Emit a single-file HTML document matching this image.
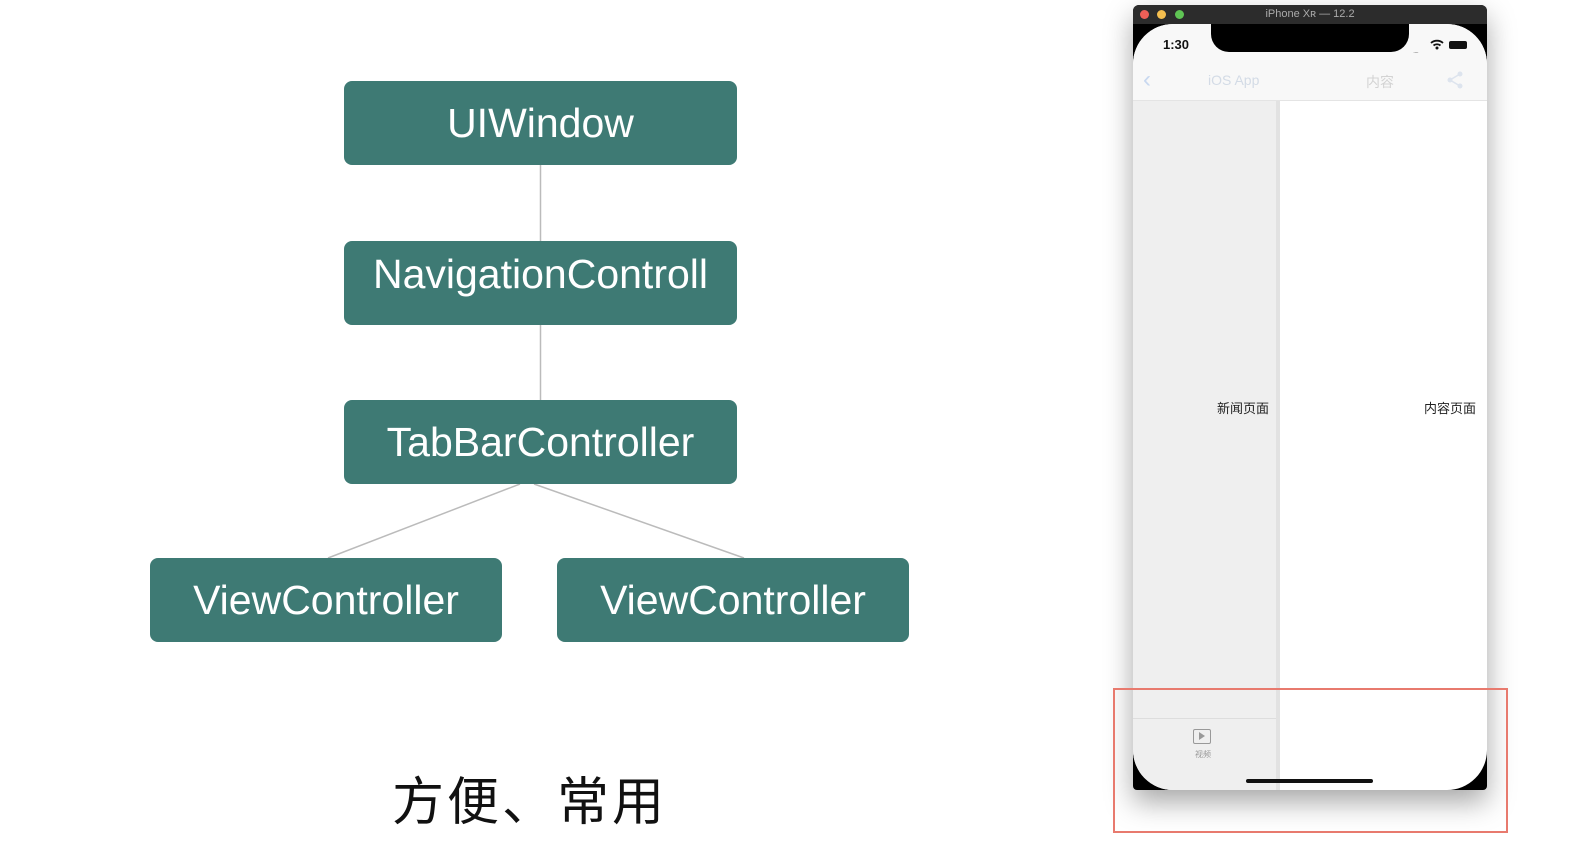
<!DOCTYPE html>
<html><head><meta charset="utf-8"><style>
body{margin:0;width:1586px;height:852px;background:#fff;position:relative;overflow:hidden;font-family:"Liberation Sans","Noto Sans CJK SC",sans-serif}
.b{position:absolute;background:#3e7a74;border-radius:8px;color:#fff;font-size:41px;text-align:center;line-height:84px;height:84px}
.a{position:absolute}
</style></head><body>
<svg class="a" style="left:0;top:0" width="1000" height="700">
<line x1="540.5" y1="164" x2="540.5" y2="241" stroke="#bbb" stroke-width="1.5"/>
<line x1="540.5" y1="324" x2="540.5" y2="400" stroke="#bbb" stroke-width="1.5"/>
<line x1="520" y1="484" x2="328" y2="558" stroke="#bbb" stroke-width="1.5"/>
<line x1="534" y1="484" x2="744" y2="558" stroke="#bbb" stroke-width="1.5"/>
</svg>
<div class="b" style="left:344px;top:81px;width:393px">UIWindow</div>
<div class="b" style="left:344px;top:241px;width:393px;line-height:66px">NavigationControll</div>
<div class="b" style="left:344px;top:400px;width:393px">TabBarController</div>
<div class="b" style="left:150px;top:558px;width:352px">ViewController</div>
<div class="b" style="left:557px;top:558px;width:352px">ViewController</div>
<div class="a" style="left:392px;top:760px;font-size:52px;color:#111;letter-spacing:3px">方便、常用</div>

<!-- phone -->
<div class="a" style="left:1133px;top:5px;width:354px;height:785px;background:#000;border-radius:6px 6px 4px 4px;box-shadow:0 12px 28px rgba(0,0,0,.35)"></div>
<div class="a" style="left:1133px;top:5px;width:354px;height:19px;background:#2c2c2c;border-radius:6px 6px 0 0;color:#aaa;font-size:11px;text-align:center;line-height:19px">iPhone Xʀ — 12.2</div>
<div class="a" style="left:1140px;top:10px;width:9px;height:9px;border-radius:50%;background:#ed5f57"></div>
<div class="a" style="left:1157px;top:10px;width:9px;height:9px;border-radius:50%;background:#f4be4f"></div>
<div class="a" style="left:1175px;top:10px;width:9px;height:9px;border-radius:50%;background:#5fc454"></div>
<div class="a" style="left:1133px;top:24px;width:354px;height:766px;background:#fff;border-radius:40px;overflow:hidden">
  <div class="a" style="left:0;top:76px;width:143px;height:690px;background:#efefef"></div>
  <div class="a" style="left:143px;top:76px;width:4px;height:690px;background:#e2e2e2"></div>
  <div class="a" style="left:0;top:0;width:354px;height:76px;background:#f8f8f8;border-bottom:1px solid #e4e4e4"></div>
  <div class="a" style="left:0;top:694px;width:143px;height:1px;background:#ddd"></div>
  <div class="a" style="left:30px;top:13px;font-size:13px;font-weight:bold;color:#111">1:30</div>
  <div class="a" style="left:280px;top:22px;font-size:8px;color:#999;letter-spacing:-1px">....</div>
  <svg class="a" style="left:297px;top:15px" width="14" height="11" viewBox="0 0 14 11"><path d="M1 4a9 9 0 0 1 12 0M3.5 6.5a5.5 5.5 0 0 1 7 0" stroke="#111" stroke-width="1.8" fill="none"/><circle cx="7" cy="9" r="1.5" fill="#111"/></svg>
  <div class="a" style="left:316px;top:17px;width:18px;height:8px;background:#111;border-radius:2px"></div>
  <div class="a" style="left:10px;top:42px;font-size:24px;color:#c8d8f0">‹</div>
  <div class="a" style="left:75px;top:48px;font-size:14px;color:#d3dbe6">iOS App</div>
  <div class="a" style="left:233px;top:48px;font-size:14px;color:#d3d3d3">内容</div>
  <svg class="a" style="left:313px;top:47px" width="18" height="18" viewBox="0 0 18 18"><circle cx="14" cy="3" r="2.5" fill="#dde4ee"/><circle cx="4" cy="9" r="2.5" fill="#dde4ee"/><circle cx="14" cy="15" r="2.5" fill="#dde4ee"/><path d="M14 3L4 9L14 15" stroke="#dde4ee" stroke-width="1.5" fill="none"/></svg>
  <div class="a" style="left:84px;top:374px;font-size:13px;color:#222">新闻页面</div>
  <div class="a" style="left:291px;top:374px;font-size:13px;color:#222">内容页面</div>
  <div class="a" style="left:60px;top:705px;width:16px;height:13px;border:1.5px solid #999;border-radius:2px"></div>
  <div class="a" style="left:66px;top:708px;width:0;height:0;border-left:6px solid #999;border-top:4px solid transparent;border-bottom:4px solid transparent"></div>
  <div class="a" style="left:62px;top:725px;font-size:8px;color:#999">视频</div>
  <div class="a" style="left:113px;top:755px;width:127px;height:4px;background:#111;border-radius:2px"></div>
</div>
<div class="a" style="left:1211px;top:24px;width:198px;height:28px;background:#000;border-radius:0 0 18px 18px"></div>
<div class="a" style="left:1113px;top:688px;width:391px;height:141px;border:2px solid #e87a6e"></div>
</body></html>
